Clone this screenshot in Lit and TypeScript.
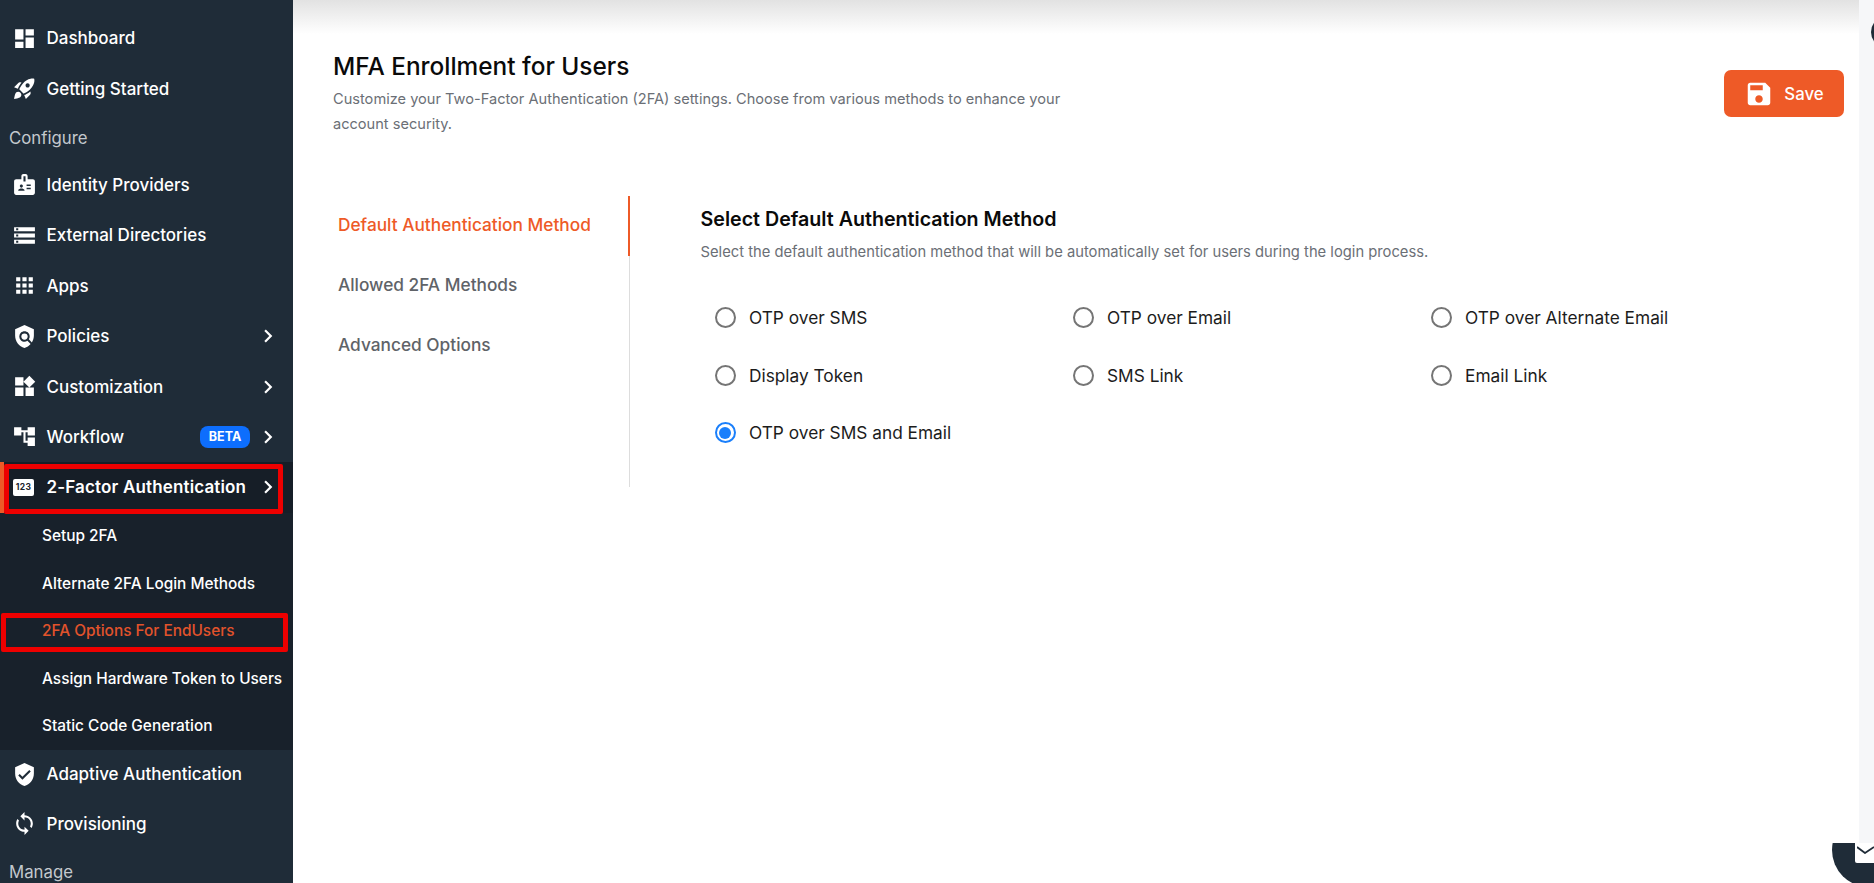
import { LitElement, html, css, svg } from "lit";
import { customElement } from "lit/decorators.js";

const ic: Record<string, any> = {
  dashboard: svg`<path d="M3 13h8V3H3v10zm0 8h8v-6H3v6zm10 0h8V11h-8v10zm0-18v6h8V3h-8z"/>`,
  rocket: svg`<path d="M9.19,6.35c-2.04,2.29-3.44,5.58-3.57,5.89L2,10.69l4.05-4.05c0.47-0.47,1.15-0.68,1.81-0.55L9.19,6.35L9.19,6.35z M11.17,17c0,0,3.74-1.55,5.89-3.7c5.4-5.4,4.5-9.62,4.21-10.57c-0.95-0.3-5.17-1.19-10.57,4.21C8.55,9.09,7,12.83,7,12.83L11.17,17z M17.65,14.81c-2.29,2.04-5.58,3.44-5.89,3.57L13.31,22l4.05-4.05c0.47-0.47,0.68-1.15,0.55-1.81L17.65,14.81L17.65,14.81z M9,18c0,0.83-0.34,1.58-0.88,2.12C6.94,21.3,2,22,2,22s0.7-4.94,1.88-6.12C4.42,15.34,5.17,15,6,15C7.66,15,9,16.34,9,18z M13,9c0-1.1,0.9-2,2-2s2,0.9,2,2s-0.9,2-2,2S13,10.1,13,9z"/>`,
  badge: svg`<path d="M20 7h-5V4c0-1.1-.9-2-2-2h-2c-1.1 0-2 .9-2 2v3H4c-1.1 0-2 .9-2 2v11c0 1.1.9 2 2 2h16c1.1 0 2-.9 2-2V9c0-1.1-.9-2-2-2zM9 12c.83 0 1.5.67 1.5 1.5S9.83 15 9 15s-1.5-.67-1.5-1.5S8.17 12 9 12zm3 6H6v-.75c0-1 2-1.5 3-1.5s3 .5 3 1.5V18zm1-9h-2V4h2v5zm5 7.5h-4V15h4v1.5zm0-3h-4V12h4v1.5z"/>`,
  storage: svg`<path d="M2 20h20v-4H2v4zm2-3h2v2H4v-2zM2 4v4h20V4H2zm4 3H4V5h2v2zm-4 7h20v-4H2v4zm2-3h2v2H4v-2z"/>`,
  apps: svg`<path d="M4 8h4V4H4v4zm6 12h4v-4h-4v4zm-6 0h4v-4H4v4zm0-6h4v-4H4v4zm6 0h4v-4h-4v4zm6-10v4h4V4h-4zm-6 4h4V4h-4v4zm6 6h4v-4h-4v4zm0 6h4v-4h-4v4z"/>`,
  policy: svg`<path d="M21,5l-9-4L3,5v6c0,5.55,3.84,10.74,9,12c2.3-0.56,4.33-1.9,5.88-3.71l-3.12-3.12c-1.94,1.29-4.58,1.07-6.29-0.64c-1.95-1.95-1.95-5.12,0-7.07c1.95-1.95,5.12-1.95,7.07,0c1.71,1.71,1.92,4.35,0.64,6.29l2.9,2.9C20.29,15.69,21,13.38,21,11V5z"/><circle cx="12" cy="12" r="3"/>`,
  widgets: svg`<path d="M13 13v8h8v-8h-8zM3 21h8v-8H3v8zM3 3v8h8V3H3zm13.66-1.31L11 7.34 16.66 13l5.66-5.66-5.66-5.65z"/>`,
  tree: svg`<path d="M22 11V3h-7v3H9V3H2v8h7V8h2v10h4v3h7v-8h-7v3h-2V8h2v3z"/>`,
  verified: svg`<path d="M12 1L3 5v6c0 5.55 3.84 10.74 9 12 5.16-1.26 9-6.45 9-12V5l-9-4zm-2 16l-4-4 1.41-1.41L10 14.17l6.59-6.59L18 9l-8 8z"/>`,
  sync: svg`<path d="M12 4V1L8 5l4 4V6c3.31 0 6 2.69 6 6 0 1.01-.25 1.97-.7 2.8l1.46 1.46C19.54 15.03 20 13.57 20 12c0-4.42-3.58-8-8-8zm0 14c-3.31 0-6-2.69-6-6 0-1.01.25-1.97.7-2.8L5.24 7.74C4.46 8.97 4 10.43 4 12c0 4.42 3.58 8 8 8v3l4-4-4-4v3z"/>`,
  chev: svg`<path d="M8.59 16.59L13.17 12 8.59 7.41 10 6l6 6-6 6z"/>`,
  save: svg`<path d="M17 3H5c-1.11 0-2 .9-2 2v14c0 1.1.89 2 2 2h14c1.1 0 2-.9 2-2V7l-4-4zm-5 16c-1.66 0-3-1.34-3-3s1.34-3 3-3 3 1.34 3 3-1.34 3-3 3zm3-10H5V5h10v4z"/>`,
};
const icon = (n: string, cls = "ic") => html`<svg class=${cls} viewBox="0 0 24 24" fill="currentColor">${ic[n]}</svg>`;

@customElement("app-root")
export class AppRoot extends LitElement {
  static styles = css`
    :host { display: block; width: 1874px; height: 883px; overflow: hidden; position: relative; background: #fff;
      font-family: Inter, "Liberation Sans", sans-serif; }
    .page { display: flex; height: 883px; }
    .side { width: 293px; flex: none; background: #1f2c38; color: #fff; padding-top: 13px; overflow: hidden; height: 883px; box-sizing: border-box; }
    .row { display: flex; align-items: center; height: 50.4px; font-size: 17px; font-weight: 500; position: relative; }
    .row .ic { width: 25px; height: 25px; margin-left: 12px; margin-right: 9.5px; flex: none; }
    .row .lbl { flex: 1; white-space: nowrap; }
    .row .chv { width: 26px; height: 26px; flex: none; margin-right: 12px; }
    .sec { display: flex; align-items: center; height: 46px; padding: 2px 0 0 9px; box-sizing: border-box; font-size: 16.8px; color: #c3c8cd; }
    .sec.m { height: 46px; padding-top: 0; }
    .beta { background: #0d6efd; color: #fff; font-size: 12.5px; font-weight: 700; border-radius: 8px; height: 22px; width: 50px; display: flex; align-items: center; justify-content: center; margin-right: 5px; }
    .row.active { background: #161e27; box-shadow: inset 4px 0 0 #ee5a27; font-weight: 600; letter-spacing: .15px; }
    .n123 { width: 21px; height: 17px; margin-left: 13px; margin-right: 12.5px; background: #fff; border-radius: 2px; color: #1a232d; font-size: 8.5px; font-weight: 700; display: flex; align-items: center; justify-content: center; flex: none; letter-spacing: .3px; }
    .sub { background: #18212b; height: 237.5px; }
    .sub div { height: 47.5px; box-sizing: border-box; padding: 0 0 1.5px 42px; display: flex; align-items: center; font-size: 15.4px; font-weight: 500; white-space: nowrap; }
    .sub .on { color: #e2532b; }
    .after { margin-top: -1px; }
    .after + .row { margin-top: -1px; }
    .main { flex: 1; position: relative; display: flex; }
    .shadow { position: absolute; left: 0; right: 0; top: 0; height: 34px; background: linear-gradient(#e2e2e2, #fff); }
    .body { flex: 1; padding: 50px 15px 0 40px; position: relative; min-width: 0; }
    .strip { width: 15px; flex: none; background: #f6f7f9; height: 843px; position: relative; z-index: 1; }
    .head { display: flex; justify-content: space-between; align-items: flex-start; }
    h1 { margin: 0; font-size: 24.4px; font-weight: 500; color: #0a0a0a; line-height: 32px; }
    .desc { margin: 4.5px 0 0; width: 745px; font-size: 14.6px; line-height: 25px; color: #6b6f76; }
    .save { margin-top: 20px; width: 120px; height: 47px; border-radius: 7px; background: #ee5a27; color: #fff; display: flex; align-items: center; justify-content: center; gap: 10px; font-size: 16.8px; font-weight: 500; }
    .save svg { width: 30px; height: 30px; }
    .cols { display: flex; margin-top: 59.5px; }
    .tabs { width: 296px; height: 291px; border-right: 1px solid #ddd; position: relative; flex: none; }
    .tab { height: 60px; display: flex; align-items: center; padding: 0 0 3px 5px; font-size: 17.3px; font-weight: 500; color: #5f6368; white-space: nowrap; box-sizing: border-box; }
    .tab.on { color: #ee5a27; border-right: 2px solid #ee5a27; margin-right: -1px; }
    .panel { padding: 7px 0 0 70.5px; flex: 1; }
    h2 { margin: 0; font-size: 19.65px; font-weight: 600; color: #0a0a0a; line-height: 32px; }
    .psub { margin: 5px 0 0; font-size: 14.75px; line-height: 24px; color: #6b6f76; }
    .grid { display: grid; grid-template-columns: repeat(3, 358px); grid-auto-rows: 57.5px; margin: 25px 0 0 14px; }
    .opt { display: flex; align-items: center; gap: 13.5px; font-size: 17.3px; color: #1c1c1c; white-space: nowrap; }
    .rad { width: 21px; height: 21px; border: 2px solid #757575; border-radius: 50%; box-sizing: border-box; flex: none; display: flex; align-items: center; justify-content: center; }
    .rad.on { border-color: #1a7ffb; }
    .rad.on::after { content: ""; width: 12px; height: 12px; border-radius: 50%; background: #1a7ffb; }
    .hl { position: absolute; border: 5px solid #ee0000; box-sizing: border-box; border-radius: 2px; pointer-events: none; z-index: 3; }
    .hl.a { left: 4px; top: 464px; width: 279px; height: 50px; }
    .hl.b { left: 1px; top: 613px; width: 287px; height: 39px; }
    .dot { position: absolute; left: 1871px; top: 16px; width: 32px; height: 32px; border-radius: 50%; background: #1f2c38; z-index: 2; }
    .chat { position: absolute; left: 1832px; top: 843px; width: 42px; height: 40px; overflow: hidden; z-index: 2; }
    .chat-c { position: absolute; left: 0; top: -30px; width: 74px; height: 74px; border-radius: 50%; background: #1f2c38; }
    .env { position: absolute; left: 23px; top: 0; width: 19px; height: 20px; background: #fff; border-radius: 0 0 0 2px; }
    .env svg { position: absolute; left: 2px; top: 3px; width: 17px; height: 8px; }
  `;
  render() {
    const opts = ["OTP over SMS", "OTP over Email", "OTP over Alternate Email", "Display Token", "SMS Link", "Email Link", "OTP over SMS and Email"];
    return html`
      <div class="page">
        <nav class="side">
          <div class="row">${icon("dashboard")}<span class="lbl">Dashboard</span></div>
          <div class="row">${icon("rocket")}<span class="lbl">Getting Started</span></div>
          <div class="sec">Configure</div>
          <div class="row">${icon("badge")}<span class="lbl">Identity Providers</span></div>
          <div class="row">${icon("storage")}<span class="lbl">External Directories</span></div>
          <div class="row">${icon("apps")}<span class="lbl">Apps</span></div>
          <div class="row">${icon("policy")}<span class="lbl">Policies</span>${icon("chev", "chv")}</div>
          <div class="row">${icon("widgets")}<span class="lbl">Customization</span>${icon("chev", "chv")}</div>
          <div class="row">${icon("tree")}<span class="lbl">Workflow</span><span class="beta">BETA</span>${icon("chev", "chv")}</div>
          <div class="row active"><span class="n123">123</span><span class="lbl">2-Factor Authentication</span>${icon("chev", "chv")}</div>
          <div class="sub">
            <div>Setup 2FA</div>
            <div>Alternate 2FA Login Methods</div>
            <div class="on">2FA Options For EndUsers</div>
            <div>Assign Hardware Token to Users</div>
            <div>Static Code Generation</div>
          </div>
          <div class="row after">${icon("verified")}<span class="lbl">Adaptive Authentication</span></div>
          <div class="row">${icon("sync")}<span class="lbl">Provisioning</span></div>
          <div class="sec m">Manage</div>
        </nav>
        <main class="main">
          <div class="shadow"></div>
          <div class="body">
            <div class="head">
              <div>
                <h1>MFA Enrollment for Users</h1>
                <p class="desc">Customize your Two-Factor Authentication (2FA) settings. Choose from various methods to enhance your account security.</p>
              </div>
              <div class="save">${icon("save", "")}<span>Save</span></div>
            </div>
            <div class="cols">
              <div class="tabs">
                <div class="tab on">Default Authentication Method</div>
                <div class="tab">Allowed 2FA Methods</div>
                <div class="tab">Advanced Options</div>
              </div>
              <div class="panel">
                <h2>Select Default Authentication Method</h2>
                <p class="psub">Select the default authentication method that will be automatically set for users during the login process.</p>
                <div class="grid">
                  ${opts.map((o, i) => html`<label class="opt"><span class="rad ${i === 6 ? "on" : ""}"></span>${o}</label>`)}
                </div>
              </div>
            </div>
          </div>
          <div class="strip"></div>
        </main>
      </div>
      <div class="hl a"></div>
      <div class="hl b"></div>
      <div class="dot"></div>
      <div class="chat"><div class="chat-c"></div><div class="env"><svg viewBox="0 0 17 8" fill="none" stroke="#1f2c38" stroke-width="1.8"><path d="M0 1l8 6 9-6"/></svg></div></div>
    `;
  }
}
